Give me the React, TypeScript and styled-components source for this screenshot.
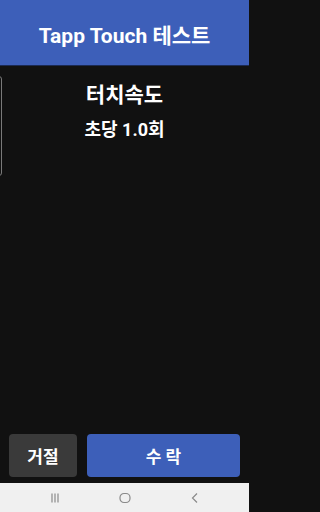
import styled, { createGlobalStyle } from 'styled-components';

const GlobalStyle = createGlobalStyle`
  html, body {
    margin: 0;
    padding: 0;
    background: #111111;
  }
  body {
    font-family: Roboto, "Noto Sans CJK KR", sans-serif;
  }
`;

const Screen = styled.div`
  width: 249px;
  height: 512px;
  display: flex;
  flex-direction: column;
  background: #111111;
  overflow: hidden;
  position: relative;
`;

const Header = styled.header`
  height: 66px;
  flex-shrink: 0;
  background: #3d5fb9;
  border-bottom: 1px solid #1b2a52;
  box-sizing: border-box;
  display: flex;
  align-items: center;
  justify-content: center;
  color: #ffffff;
  font-size: 21px;
  font-weight: 700;
  padding-top: 2px;
`;

const Body = styled.main`
  flex: 1;
  position: relative;
  display: flex;
  flex-direction: column;
  align-items: center;
  padding-top: 15px;
`;

// previous card peeking in from the left edge
const PeekCard = styled.div`
  position: absolute;
  left: -40px;
  top: 10px;
  width: 42px;
  height: 100px;
  border: 1px solid #7a7a7a;
  border-radius: 3px;
  box-sizing: border-box;
`;

const Title = styled.div`
  color: #ffffff;
  font-size: 21px;
  font-weight: 700;
  line-height: 28px;
`;

const Rate = styled.div`
  color: #ffffff;
  font-size: 18px;
  font-weight: 700;
  line-height: 22px;
  margin-top: 10px;
`;

const Actions = styled.div`
  display: flex;
  gap: 10px;
  padding: 0 9px 6px 9px;
  flex-shrink: 0;
`;

const ActionButton = styled.button<{ $primary?: boolean }>`
  height: 43px;
  border: none;
  border-radius: 4px;
  background: ${(p) => (p.$primary ? '#3d5fb9' : '#3a3a3a')};
  color: #ffffff;
  font-family: inherit;
  font-size: 17px;
  font-weight: 700;
  flex: ${(p) => (p.$primary ? 1 : '0 0 68px')};
  padding: 0;
`;

const NavBar = styled.nav`
  height: 29px;
  flex-shrink: 0;
  background: #f0f0f0;
  display: flex;
  align-items: center;
  justify-content: center;
  gap: 56px;
`;

const NavIcon = styled.svg`
  width: 14px;
  height: 14px;
  stroke: #8a8a8a;
  fill: none;
  stroke-width: 1.2;
`;

export default function App() {
  return (
    <>
      <GlobalStyle />
      <Screen>
        <Header>Tapp Touch 테스트</Header>
        <Body>
          <PeekCard />
          <Title>터치속도</Title>
          <Rate>초당 1.0회</Rate>
        </Body>
        <Actions>
          <ActionButton>거절</ActionButton>
          <ActionButton $primary>수 락</ActionButton>
        </Actions>
        <NavBar>
          <NavIcon viewBox="0 0 14 14">
            <path d="M4 2.5v9M7 2.5v9M10 2.5v9" />
          </NavIcon>
          <NavIcon viewBox="0 0 14 14">
            <rect x="2" y="2.5" width="10" height="9" rx="4" />
          </NavIcon>
          <NavIcon viewBox="0 0 14 14">
            <path d="M9 2.5L4.5 7L9 11.5" />
          </NavIcon>
        </NavBar>
      </Screen>
    </>
  );
}
